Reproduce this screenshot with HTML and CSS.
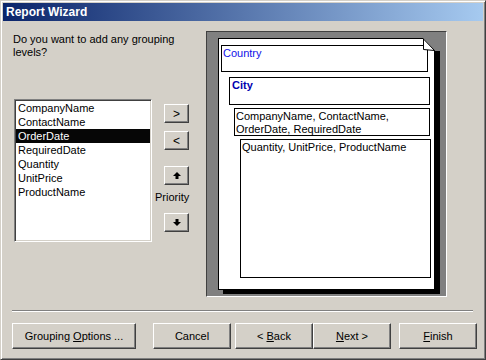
FILE: index.html
```html
<!DOCTYPE html>
<html lang="en">
	<head>
		<meta charset="UTF-8" />
		<title>Report Wizard</title>
		<link rel="stylesheet" href="styles.css">
	</head>

	<body>
		<div class="window">
			<div class="titlebar">Report Wizard</div>

			<div class="wizard">
				<div class="left">
					<p class="question">Do you want to add any grouping<br />levels?</p>
					<div class="picker">
						<ul class="fields">
							<li>CompanyName</li>
							<li>ContactName</li>
							<li class="selected">OrderDate</li>
							<li>RequiredDate</li>
							<li>Quantity</li>
							<li>UnitPrice</li>
							<li>ProductName</li>
						</ul>
						<div class="movers">
							<button class="btn small add">&gt;</button>
							<button class="btn small remove">&lt;</button>
							<button class="btn small up">
								<svg width="8" height="7" viewBox="0 0 8 7"><polygon points="4,0 8,4 5.5,4 5.5,7 2.5,7 2.5,4 0,4" fill="#000" /></svg>
							</button>
							<span class="priority">Priority</span>
							<button class="btn small down">
								<svg width="8" height="7" viewBox="0 0 8 7"><polygon points="4,7 8,3 5.5,3 5.5,0 2.5,0 2.5,3 0,3" fill="#000" /></svg>
							</button>
						</div>
					</div>
				</div>

				<div class="preview">
					<div class="page">
						<svg class="fold" width="19" height="13" viewBox="0 0 19 13">
							<polygon points="1,0 19,0 19,13 13,13" fill="#808080" />
							<polygon points="1.5,1 1.5,11.5 12.5,12.5" fill="#fff" stroke="#000" stroke-width="1" />
						</svg>
						<div class="level country">Country</div>
						<div class="level city">City</div>
						<div class="level company">CompanyName, ContactName,<br />OrderDate, RequiredDate</div>
						<div class="level detail">Quantity, UnitPrice, ProductName</div>
					</div>
				</div>
			</div>

			<div class="separator"></div>

			<div class="footer">
				<button class="btn wide grouping">Grouping <u>O</u>ptions ...</button>
				<button class="btn cancel">Cancel</button>
				<button class="btn back">&lt; <u>B</u>ack</button>
				<button class="btn next"><u>N</u>ext &gt;</button>
				<button class="btn finish"><u>F</u>inish</button>
			</div>
		</div>
	</body>
</html>
```

FILE: styles.css
```css
* {
	box-sizing: border-box;
}

body {
	margin: 0;
	background: #d4d0c8;
	font-family: "Liberation Sans", Arial, sans-serif;
	font-size: 11px;
	color: #000;
}

.window {
	width: 486px;
	height: 360px;
	padding: 2px;
	border: 1px solid;
	border-color: #d4d0c8 #404040 #404040 #d4d0c8;
	box-shadow: inset 1px 1px #fff, inset -1px -1px #808080;
	background: #d4d0c8;
}

.titlebar {
	height: 18px;
	padding-left: 3px;
	line-height: 18px;
	font-size: 12px;
	font-weight: bold;
	color: #fff;
	background: linear-gradient(to right, #0a246a, #a6caf0);
}

.wizard {
	display: flex;
	height: 289px;
	padding: 10px 0 0 10px;
}

.left {
	width: 193px;
}

.question {
	margin: 2px 0 0 0;
	line-height: 13px;
}

.picker {
	display: flex;
	margin-top: 40px;
	margin-left: 1px;
}

.fields {
	list-style: none;
	margin: 0;
	padding: 1px;
	width: 138px;
	height: 143px;
	background: #fff;
	border: 1px solid;
	border-color: #808080 #fff #fff #808080;
	box-shadow: inset 1px 1px #404040, inset -1px -1px #d4d0c8;
}

.fields li {
	height: 14px;
	line-height: 14px;
	padding-left: 2px;
	white-space: nowrap;
}

.fields li.selected {
	background: #060606;
	color: #fff;
}

.movers {
	display: flex;
	flex-direction: column;
	align-items: flex-start;
	width: 34px;
	margin-left: 3px;
}

.btn {
	display: block;
	font-family: "Liberation Sans", Arial, sans-serif;
	font-size: 11px;
	color: #000;
	background: #d4d0c8;
	padding: 0;
	margin: 0;
	border: 1px solid;
	border-color: #fff #404040 #404040 #fff;
	box-shadow: inset -1px -1px #808080;
	border-radius: 0;
	text-align: center;
	white-space: nowrap;
}

.small {
	width: 25px;
	height: 19px;
	margin-left: 9px;
	font-size: 12px;
	line-height: 16px;
}

.small svg {
	display: block;
	margin: 0 auto;
}

.add {
	margin-top: 5px;
}

.remove {
	margin-top: 8px;
}

.up {
	margin-top: 16px;
}

.priority {
	width: 34px;
	margin-top: 6px;
	line-height: 13px;
	text-align: center;
}

.down {
	margin-top: 9px;
}

.preview {
	width: 241px;
	height: 266px;
	padding: 6px 0 0 11px;
	background: #808080;
	border: 1px solid;
	border-color: #404040 #fff #fff #404040;
}

.page {
	position: relative;
	width: 217px;
	height: 252px;
	background: #fff;
	border: 1px solid #000;
	box-shadow: 5px 4px 0 #000;
}

.fold {
	position: absolute;
	top: -1px;
	right: -7px;
}

.level {
	border: 1px solid #000;
	line-height: 13px;
}

.country {
	width: 207px;
	height: 27px;
	margin: 6px 0 0 2px;
	padding: 1px;
	color: #1010e8;
}

.city {
	width: 201px;
	height: 28px;
	margin: 5px 0 0 10px;
	padding: 1px 2px;
	font-weight: bold;
	color: #0000b0;
}

.company {
	width: 196px;
	height: 28px;
	margin: 3px 0 0 15px;
	padding: 1px;
}

.detail {
	width: 191px;
	height: 139px;
	margin: 3px 0 0 21px;
	padding: 1px;
}

.separator {
	height: 2px;
	margin: 0 10px 0 9px;
	border-top: 1px solid #808080;
	border-bottom: 1px solid #fff;
}

.footer {
	display: flex;
	padding: 11px 0 0 9px;
}

.footer .btn {
	width: 78px;
	height: 26px;
	line-height: 23px;
}

.footer .grouping {
	width: 124px;
}

.cancel {
	margin-left: 17px;
}

.back {
	margin-left: 4px;
}

.finish {
	margin-left: 8px;
}
```
